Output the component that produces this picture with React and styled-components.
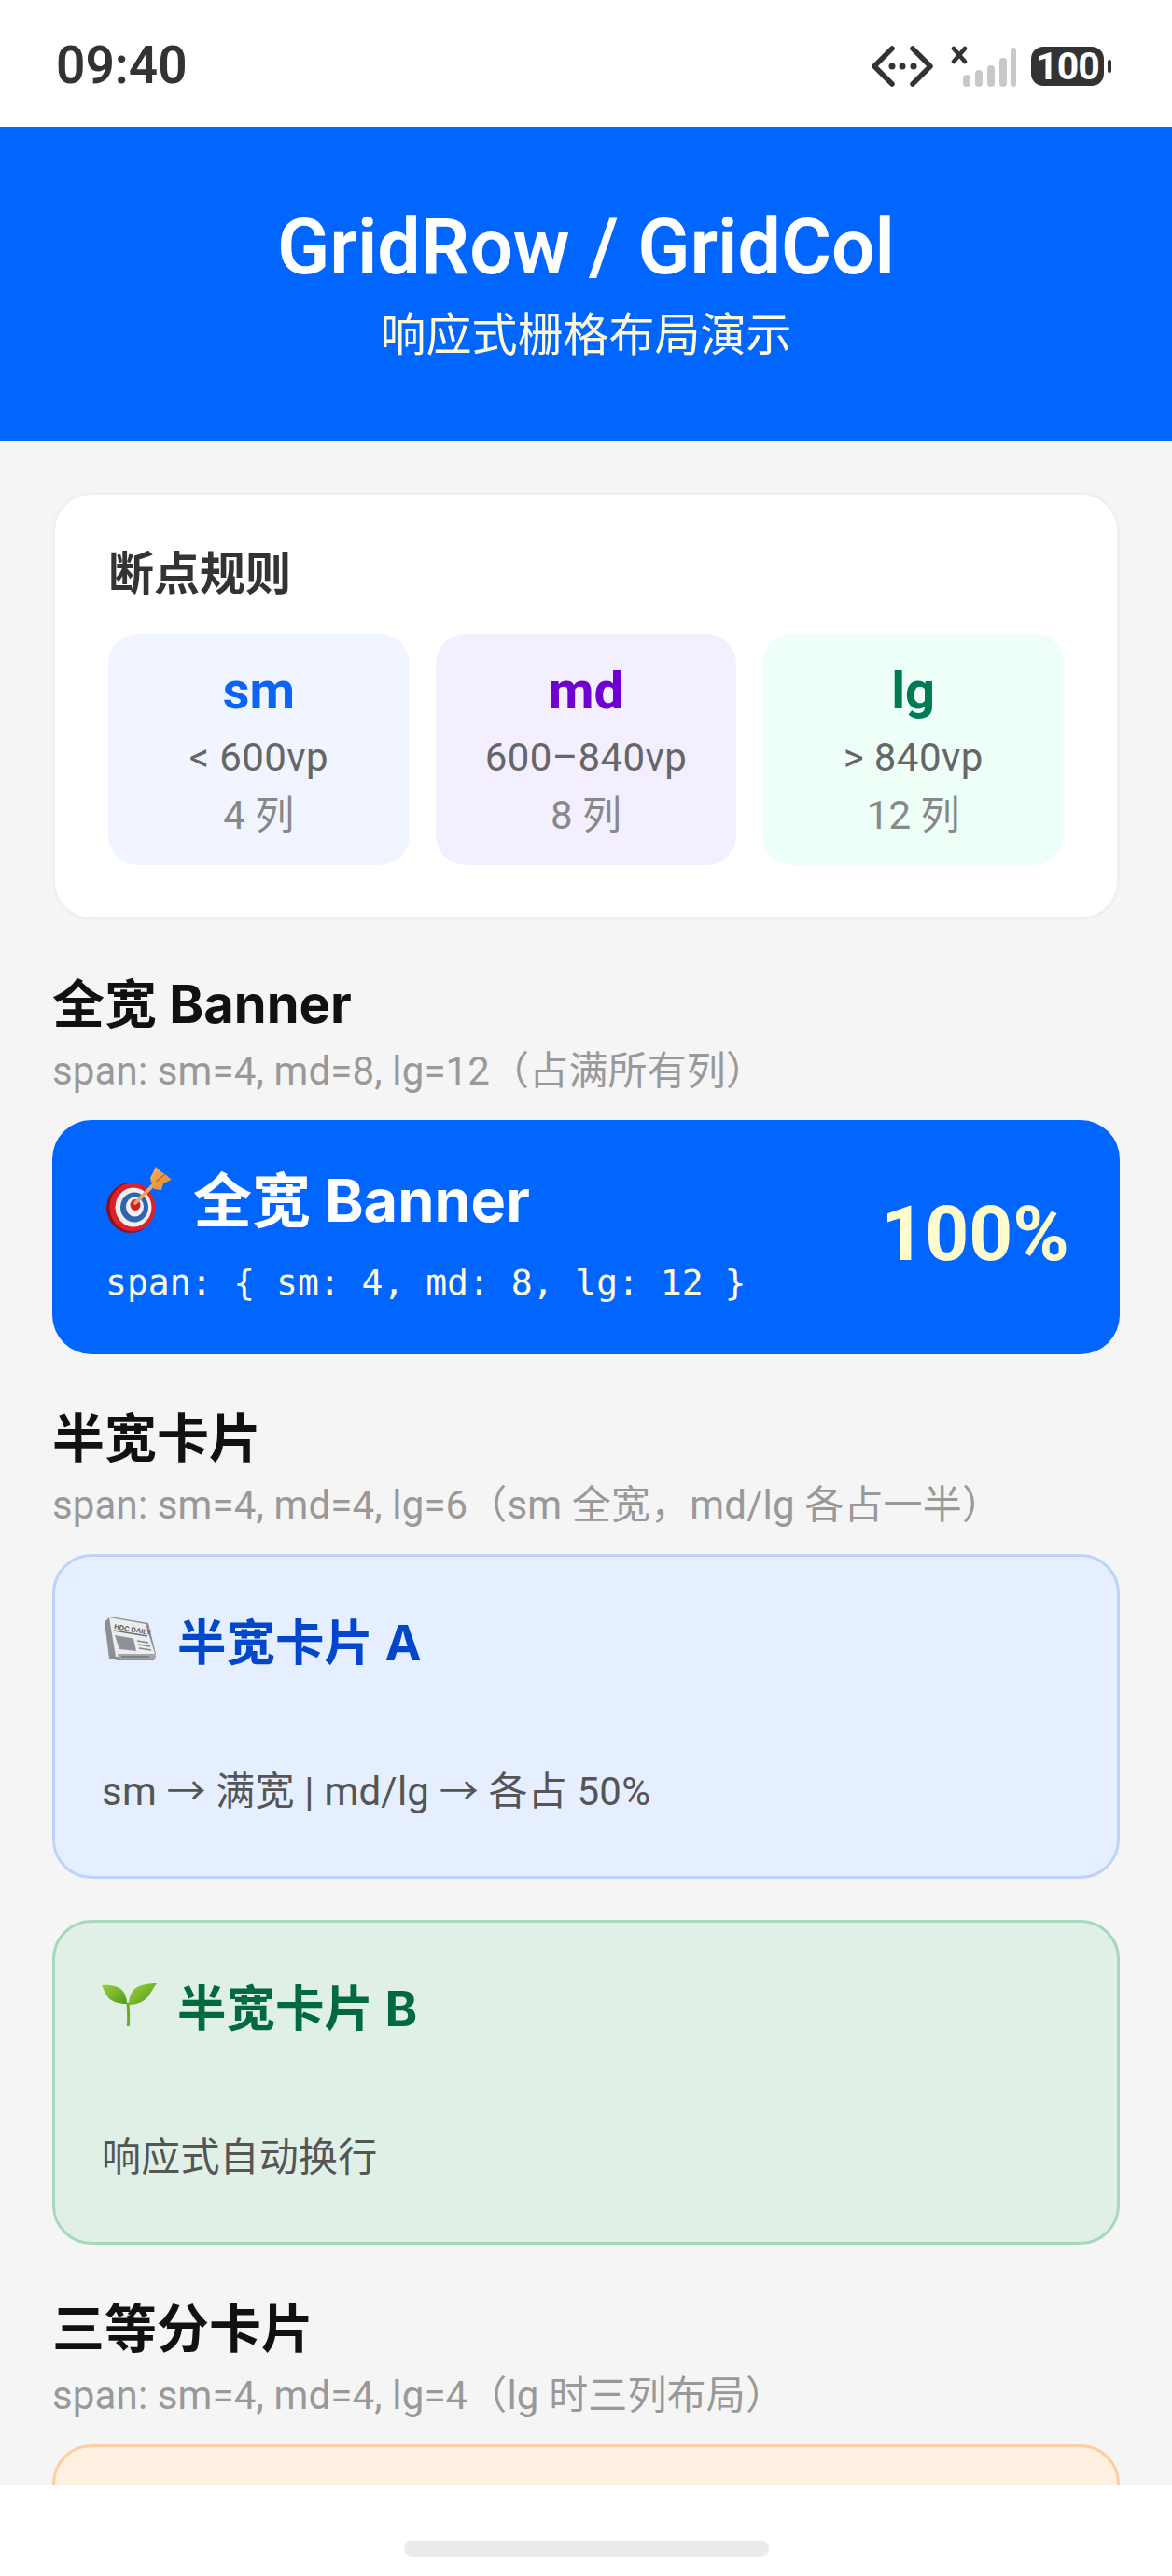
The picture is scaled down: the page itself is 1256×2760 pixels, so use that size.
import React from 'react';
import styled, { createGlobalStyle } from 'styled-components';

const FONT = `Roboto, "Noto Sans CJK SC", sans-serif`;
const HEADING_FONT = `Inter, "Noto Sans CJK SC", sans-serif`;

const GlobalStyle = createGlobalStyle`
  html, body {
    margin: 0;
    padding: 0;
    background: #f5f5f5;
  }
  body {
    font-family: ${FONT};
  }
`;

const Page = styled.div`
  width: 1256px;
  height: 2760px;
  display: flex;
  flex-direction: column;
  overflow: hidden;
  background: #f5f5f5;
`;

const StatusBar = styled.div`
  height: 136px;
  flex: none;
  background: #fff;
  display: flex;
  align-items: center;
  justify-content: space-between;
  padding: 0 65px 0 60px;
  box-sizing: border-box;
`;

const Clock = styled.div`
  font-size: 55px;
  font-weight: 600;
  color: #333;
  line-height: 1;
  margin-top: 4px;
`;

const StatusIcons = styled.div`
  display: flex;
  align-items: center;
  gap: 16px;
  margin-top: 6px;
`;

const Battery = styled.div`
  display: flex;
  align-items: center;
  gap: 4px;
`;

const BatteryBody = styled.div`
  width: 78px;
  height: 42px;
  border-radius: 13px;
  background: #333;
  color: #fff;
  font-size: 41px;
  font-weight: 700;
  line-height: 42px;
  text-align: center;
  letter-spacing: -1px;
`;

const BatteryTip = styled.div`
  width: 4px;
  height: 14px;
  border-radius: 2px;
  background: #333;
`;

const Header = styled.header`
  height: 336px;
  flex: none;
  background: #0066ff;
  display: flex;
  flex-direction: column;
  align-items: center;
  padding-top: 81px;
  box-sizing: border-box;
`;

const HeaderTitle = styled.h1`
  margin: 0;
  font-size: 82.5px;
  font-weight: 600;
  line-height: 96px;
  color: #fff;
`;

const HeaderSub = styled.div`
  font-size: 49px;
  line-height: 60px;
  margin-top: 17px;
  color: #fffbd8;
`;

const Content = styled.main`
  flex: 1;
  min-height: 0;
  overflow: hidden;
  padding: 55px 56px 0;
`;

const RuleCard = styled.section`
  background: #fff;
  border: 3px solid #f0f0f0;
  border-radius: 42px;
  padding: 56px 57px 56px;
`;

const RuleTitle = styled.h2`
  margin: 0 0 33px;
  font-size: 49px;
  line-height: 60px;
  font-weight: 700;
  color: #333;
`;

const RuleGrid = styled.div`
  display: grid;
  grid-template-columns: repeat(3, 1fr);
  gap: 28px;
`;

const RuleBox = styled.div`
  height: 248px;
  border-radius: 32px;
  background: ${(p) => p.$bg};
  display: flex;
  flex-direction: column;
  align-items: center;
  padding-top: 28px;
  box-sizing: border-box;
`;

const RuleName = styled.div`
  font-size: 56px;
  line-height: 66px;
  font-weight: 700;
  color: ${(p) => p.$color};
`;

const RuleRange = styled.div`
  font-size: 42px;
  line-height: 56px;
  margin-top: 11px;
  letter-spacing: 0.4px;
  color: #666;
`;

const RuleCols = styled.div`
  font-size: 42px;
  line-height: 56px;
  margin-top: 6px;
  color: #888;
`;

const Section = styled.section`
  margin-top: 57px;
`;

const SectionTitle = styled.h2`
  margin: 0;
  font-family: ${HEADING_FONT};
  font-size: 56px;
  line-height: 66px;
  font-weight: 700;
  color: #111;
`;

const SectionSub = styled.div`
  font-size: 42px;
  line-height: 52px;
  margin-top: 13px;
  letter-spacing: 0.15px;
  color: #999;
  white-space: nowrap;
`;

const Banner = styled.div`
  height: 251px;
  margin-top: 26px;
  border-radius: 42px;
  background: #0066ff;
  display: flex;
  align-items: center;
  justify-content: space-between;
  padding: 0 54px 0 57px;
  box-sizing: border-box;
`;

const BannerText = styled.div`
  margin-bottom: 6px;
`;

const BannerTitle = styled.div`
  display: flex;
  align-items: center;
  gap: 22px;
  font-family: ${HEADING_FONT};
  font-size: 63px;
  line-height: 76px;
  font-weight: 700;
  color: #fff;
`;

const BannerCode = styled.div`
  font-family: "DejaVu Sans Mono", monospace;
  font-size: 38px;
  line-height: 48px;
  margin-top: 26px;
  color: #fffbd8;
  white-space: pre;
`;

const BannerPercent = styled.div`
  font-size: 82px;
  font-weight: 700;
  line-height: 90px;
  margin-bottom: 8px;
  color: #fffbcc;
`;

const HalfCard = styled.div`
  height: 348px;
  margin-top: ${(p) => p.$top}px;
  border: 3px solid ${(p) => p.$border};
  border-radius: 42px;
  background: ${(p) => p.$bg};
  box-sizing: border-box;
  padding: 56px 50px 0;
`;

const HalfTitle = styled.div`
  display: flex;
  align-items: center;
  gap: 21px;
  height: 64px;
  font-family: ${HEADING_FONT};
  font-size: 52.5px;
  font-weight: 700;
  color: ${(p) => p.$color};
`;

const HalfDesc = styled.div`
  margin-top: 106px;
  font-size: 42px;
  line-height: 52px;
  letter-spacing: 0.2px;
  color: #555;
`;

const Footer = styled.footer`
  height: 98px;
  flex: none;
  background: #fff;
  display: flex;
  justify-content: center;
  padding-top: 60px;
  box-sizing: border-box;
`;

const HomeBar = styled.div`
  width: 391px;
  height: 18px;
  border-radius: 9px;
  background: #ebebeb;
`;

const NetworkIcon = () => (
  <svg width="68" height="44" viewBox="0 0 68 44" fill="none">
    <path d="M23 3 4 22l19 19M45 3l19 19-19 19" stroke="#333" strokeWidth="5.5" strokeLinecap="round" strokeLinejoin="round" />
    <circle cx="23" cy="22" r="3.5" fill="#333" />
    <circle cx="34" cy="22" r="3.5" fill="#333" />
    <circle cx="46" cy="22" r="3.5" fill="#333" />
  </svg>
);

const SignalIcon = () => (
  <svg width="72" height="44" viewBox="0 0 72 44" fill="none">
    <path d="M5 3l12 14M17 3 5 17" stroke="#333" strokeWidth="4.5" strokeLinecap="round" />
    <g fill="#c8c8c8">
      <rect x="15" y="31" width="8" height="13" rx="4" />
      <rect x="28" y="26" width="8" height="18" rx="4" />
      <rect x="41" y="21" width="8" height="23" rx="4" />
      <rect x="54" y="13" width="8" height="31" rx="4" />
      <rect x="66" y="2" width="6" height="42" rx="3" />
    </g>
  </svg>
);

const TargetEmoji = () => (
  <svg width="72" height="72" viewBox="0 0 72 72">
    <defs>
      <linearGradient id="fletch" x1="0" y1="0" x2="1" y2="1">
        <stop offset="0" stopColor="#f7ad58" />
        <stop offset="1" stopColor="#dd8a35" />
      </linearGradient>
    </defs>
    <ellipse cx="27" cy="44" rx="26" ry="27" fill="#8e1016" />
    <ellipse cx="29" cy="43.5" rx="24.5" ry="26" fill="#d8232a" />
    <ellipse cx="30" cy="43.5" rx="19.5" ry="21" fill="#f2eeee" />
    <ellipse cx="31" cy="43.5" rx="15" ry="16" fill="#2f65ad" />
    <ellipse cx="31.5" cy="43" rx="9.5" ry="10.5" fill="#f0f0f2" />
    <ellipse cx="32" cy="41" rx="5.5" ry="6" fill="#cf2028" />
    <path d="M32 39 57 14" stroke="#eea766" strokeWidth="3.8" strokeLinecap="round" />
    <path d="M48 12 54 0l5 5 5 3 7 6-9 4-2 7-8-1-3-8z" fill="url(#fletch)" />
    <path d="M54 16 64 8" stroke="#b86a22" strokeWidth="1.4" />
  </svg>
);

const NewspaperEmoji = () => (
  <svg width="60" height="50" viewBox="0 0 60 50">
    <path d="M3 7 9 1l41 7 8 33-2 7H17l-9-2z" fill="#8d8f93" />
    <path d="M8 2 47 9l11 35H15z" fill="#eceded" />
    <text x="13" y="14" fontSize="7.5" fontFamily="Liberation Sans, sans-serif" fontWeight="700" fill="#55585d" transform="rotate(10 13 14)">HDC DAILY</text>
    <path d="M13 16 49 22" stroke="#6f7276" strokeWidth="1.6" />
    <path d="M14 21 34 24.5 37 38 19 36z" fill="#8e9298" />
    <path d="M38 27 50 29M39 31 52 33M40 35 53 37" stroke="#84878b" strokeWidth="1.5" />
    <path d="M17 41h40l1 3-1 3H18z" fill="#a4a6aa" />
    <path d="M21 44h30" stroke="#6f7276" strokeWidth="1.4" />
  </svg>
);

const SeedlingEmoji = () => (
  <svg width="60" height="46" viewBox="0 0 60 46" fill="none">
    <defs>
      <linearGradient id="leaf" x1="0" y1="0" x2="1" y2="1">
        <stop offset="0" stopColor="#9ed13c" />
        <stop offset="1" stopColor="#4f9a1e" />
      </linearGradient>
    </defs>
    <path d="M28 22c.8 7 .8 15 .4 23" stroke="#6eab2c" strokeWidth="3" strokeLinecap="round" />
    <path d="M0 2c9-1 20 1 24 8 2 4 3 8 3 12-8 0-17-2-21-8C3 10 2 6 0 2z" fill="url(#leaf)" />
    <path d="M59 0c-10 0-23 2-27 10-2 4-3 8-3 13 8 0 16-3 21-9 3-4 5-9 9-14z" fill="url(#leaf)" />
  </svg>
);

const rules = [
  { name: 'sm', range: '< 600vp', cols: '4 列', bg: '#f0f5ff', color: '#0a64f5' },
  { name: 'md', range: '600–840vp', cols: '8 列', bg: '#f3efff', color: '#6f00cf' },
  { name: 'lg', range: '> 840vp', cols: '12 列', bg: '#eefff7', color: '#007a55' },
];

const App = () => {
  return (
    <Page>
      <GlobalStyle />
      <StatusBar>
        <Clock>09:40</Clock>
        <StatusIcons>
          <NetworkIcon />
          <SignalIcon />
          <Battery>
            <BatteryBody>100</BatteryBody>
            <BatteryTip />
          </Battery>
        </StatusIcons>
      </StatusBar>

      <Header>
        <HeaderTitle>GridRow / GridCol</HeaderTitle>
        <HeaderSub>响应式栅格布局演示</HeaderSub>
      </Header>

      <Content>
        <RuleCard>
          <RuleTitle>断点规则</RuleTitle>
          <RuleGrid>
            {rules.map((r) => (
              <RuleBox key={r.name} $bg={r.bg}>
                <RuleName $color={r.color}>{r.name}</RuleName>
                <RuleRange>{r.range}</RuleRange>
                <RuleCols>{r.cols}</RuleCols>
              </RuleBox>
            ))}
          </RuleGrid>
        </RuleCard>

        <Section>
          <SectionTitle>全宽 Banner</SectionTitle>
          <SectionSub>span: sm=4, md=8, lg=12（占满所有列）</SectionSub>
          <Banner>
            <BannerText>
              <BannerTitle>
                <TargetEmoji />
                全宽 Banner
              </BannerTitle>
              <BannerCode>{'span: { sm: 4, md: 8, lg: 12 }'}</BannerCode>
            </BannerText>
            <BannerPercent>100%</BannerPercent>
          </Banner>
        </Section>

        <Section>
          <SectionTitle>半宽卡片</SectionTitle>
          <SectionSub>span: sm=4, md=4, lg=6（sm 全宽，md/lg 各占一半）</SectionSub>
          <HalfCard $top={26} $border="#bfd3fa" $bg="#e6efff">
            <HalfTitle $color="#0047cc">
              <NewspaperEmoji />
              半宽卡片 A
            </HalfTitle>
            <HalfDesc>sm → 满宽 | md/lg → 各占 50%</HalfDesc>
          </HalfCard>
          <HalfCard $top={44} $border="#a8d8bc" $bg="#e0f0e7">
            <HalfTitle $color="#006b3f">
              <SeedlingEmoji />
              半宽卡片 B
            </HalfTitle>
            <HalfDesc>响应式自动换行</HalfDesc>
          </HalfCard>
        </Section>

        <Section>
          <SectionTitle>三等分卡片</SectionTitle>
          <SectionSub>span: sm=4, md=4, lg=4（lg 时三列布局）</SectionSub>
          <HalfCard $top={26} $border="#fbcf9f" $bg="#fef1e2" />
        </Section>
      </Content>

      <Footer>
        <HomeBar />
      </Footer>
    </Page>
  );
};

export default App;
